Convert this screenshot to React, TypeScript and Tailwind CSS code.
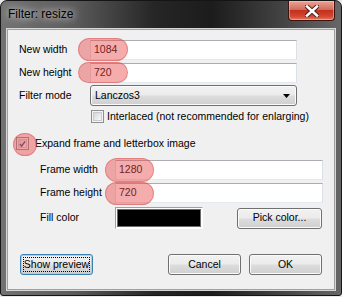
import React from "react";

const font = { fontFamily: '"Liberation Sans", Arial, sans-serif' };

function Mark({ className }: { className: string }) {
  // translucent red marker blob drawn over a field
  return (
    <div
      className={`absolute rounded-full bg-[rgba(232,72,72,0.45)] border border-[rgba(210,70,70,0.4)] pointer-events-none ${className}`}
    />
  );
}

function TextBox({ value, width }: { value: string; width: string }) {
  return (
    <div
      className={`${width} h-[20px] bg-white border border-[#dbdfe6] border-t-[#abadb3] border-b-[#e3e9ef] flex items-center pl-[3px] text-[10.5px] text-black`}
    >
      {value}
    </div>
  );
}

function Button({
  label,
  width,
  focused = false,
}: {
  label: string;
  width: string;
  focused?: boolean;
}) {
  return (
    <div
      className={`relative ${width} h-[21px] rounded-[3px] border flex items-center justify-center text-[10.5px] text-black bg-[linear-gradient(#f2f2f2_0%,#ebebeb_48%,#dddddd_52%,#cfcfcf_100%)] ${
        focused
          ? "border-[#3c7fb1] shadow-[inset_0_0_0_1px_#9ad6f4]"
          : "border-[#707070] shadow-[inset_0_0_0_1px_#fbfbfb]"
      }`}
    >
      {label}
      {focused && (
        <div className="absolute inset-[2px] border border-dotted border-black" />
      )}
    </div>
  );
}

function CheckBox({ checked = false }: { checked?: boolean }) {
  return (
    <div className="w-[13px] h-[13px] border border-[#8e8f8f] bg-[#f4f4f4] p-[1px] shrink-0">
      <div className="w-full h-full border border-[#c7cacf] bg-[linear-gradient(135deg,#d3d6da,#fafafa)] flex items-center justify-center">
        {checked && (
          <svg width="8" height="8" viewBox="0 0 8 8">
            <path d="M1 4 L3 6.5 L7 1" fill="none" stroke="#3b4a7a" strokeWidth="1.6" />
          </svg>
        )}
      </div>
    </div>
  );
}

export default function App() {
  return (
    <div className="w-[342px] h-[297px] bg-[#e8e8e8]" style={font}>
      <div className="relative w-[342px] h-[296px] rounded-t-[7px] rounded-b-[3px] border border-[#151515] bg-[linear-gradient(90deg,#727272_0%,#5a5a5a_22%,#262626_45%,#1c1c1c_62%,#3a3a3a_78%,#676767_100%)] flex flex-col">
        {/* title bar */}
        <div className="h-[28px] flex items-center pl-[7px] pb-[2px] text-[12px] text-black [text-shadow:0_0_6px_#e0e0e0,0_0_12px_#c8c8c8]">
          Filter: resize
        </div>

        {/* close button */}
        <div className="absolute top-0 right-[6px] w-[47px] h-[20px] rounded-b-[4px] border border-t-0 border-[#3a1410] bg-[linear-gradient(#e8a597_0%,#d46b5a_45%,#c2321f_50%,#d3452f_80%,#e27b5c_100%)] shadow-[inset_0_0_0_1px_rgba(255,210,200,0.45)] flex items-center justify-center">
          <svg width="14" height="12" viewBox="0 0 14 12">
            <path
              d="M2 1.5 L12 10.5 M12 1.5 L2 10.5"
              stroke="#4a1a14"
              strokeWidth="4.4"
              strokeLinecap="square"
            />
            <path
              d="M2 1.5 L12 10.5 M12 1.5 L2 10.5"
              stroke="#ffffff"
              strokeWidth="2.6"
              strokeLinecap="square"
            />
          </svg>
        </div>

        {/* client area */}
        <div className="relative mx-[6px] mb-[5px] flex-1 border border-[#a0a0a0] shadow-[0_0_0_1px_#d8d8d8] bg-[#f0f0f0] flex flex-col text-[10.5px] text-black">
          <div className="mt-[10px] h-[20px] flex items-center">
            <div className="w-[82px] pl-[11px]">New width</div>
            <TextBox value="1084" width="w-[207px]" />
          </div>
          <div className="mt-[3px] h-[20px] flex items-center">
            <div className="w-[82px] pl-[11px]">New height</div>
            <TextBox value="720" width="w-[207px]" />
          </div>
          <div className="mt-[2px] h-[21px] flex items-center">
            <div className="w-[82px] pl-[11px]">Filter mode</div>
            <div className="w-[207px] h-[21px] rounded-[3px] border border-[#707070] shadow-[inset_0_0_0_1px_#fbfbfb] bg-[linear-gradient(#f2f2f2_0%,#ebebeb_48%,#dddddd_52%,#cfcfcf_100%)] flex items-center justify-between pl-[4px] pr-[6px]">
              <span>Lanczos3</span>
              <svg width="7" height="4" viewBox="0 0 7 4">
                <path d="M0 0 H7 L3.5 4 Z" fill="#000" />
              </svg>
            </div>
          </div>
          <div className="mt-[4px] h-[13px] flex items-center pl-[83px] gap-[3px]">
            <CheckBox />
            <span>Interlaced (not recommended for enlarging)</span>
          </div>
          <div className="mt-[14px] h-[13px] flex items-center pl-[8px] gap-[6px]">
            <CheckBox checked />
            <span>Expand frame and letterbox image</span>
          </div>
          <div className="mt-[10px] h-[20px] flex items-center">
            <div className="w-[107px] pl-[32px]">Frame width</div>
            <TextBox value="1280" width="w-[208px]" />
          </div>
          <div className="mt-[3px] h-[20px] flex items-center">
            <div className="w-[107px] pl-[32px]">Frame height</div>
            <TextBox value="720" width="w-[208px]" />
          </div>
          <div className="mt-[4px] h-[22px] flex items-center">
            <div className="w-[107px] pl-[32px]">Fill color</div>
            <div className="w-[88px] h-[22px] border border-[#a0a0a0] border-r-white border-b-white bg-[#fdfdfd] p-[1px]">
              <div className="w-full h-full bg-black border border-[#6a6a6a]" />
            </div>
            <div className="ml-[34px]">
              <Button label="Pick color..." width="w-[85px]" />
            </div>
          </div>
          <div className="mt-[25px] h-[21px] flex items-center pl-[12px]">
            <Button label="Show preview" width="w-[73px]" focused />
            <div className="ml-[75px]">
              <Button label="Cancel" width="w-[73px]" />
            </div>
            <div className="ml-[8px]">
              <Button label="OK" width="w-[73px]" />
            </div>
          </div>

          {/* red markers */}
          <Mark className="left-[70px] top-[8px] w-[50px] h-[23px]" />
          <Mark className="left-[70px] top-[32px] w-[50px] h-[21px]" />
          <Mark className="left-[5px] top-[103px] w-[24px] h-[23px]" />
          <Mark className="left-[97px] top-[128px] w-[49px] h-[24px]" />
          <Mark className="left-[97px] top-[152px] w-[49px] h-[23px]" />
        </div>
      </div>
    </div>
  );
}
